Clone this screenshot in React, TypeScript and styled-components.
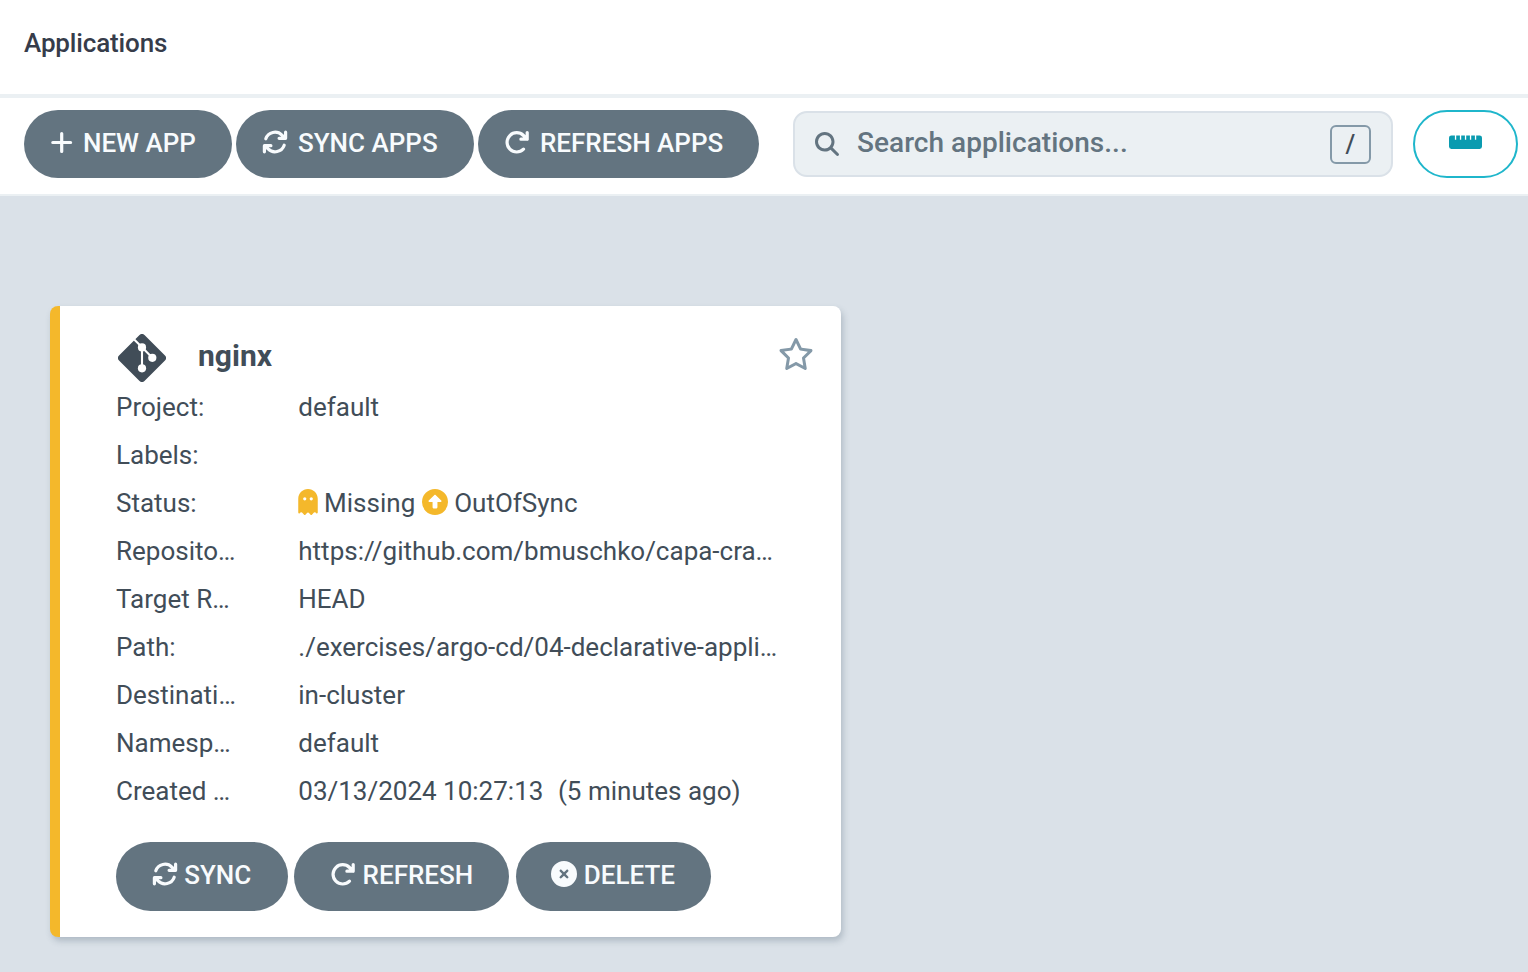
import React from 'react';
import styled, { createGlobalStyle } from 'styled-components';
import {
  FaMagnifyingGlass,
  FaRegStar,
  FaGhost,
  FaCircleUp,
  FaCircleXmark,
} from 'react-icons/fa6';

const GlobalStyle = createGlobalStyle`
  * { box-sizing: border-box; }
  body {
    margin: 0;
    background: #dae1e8;
    color: #414d58;
    font-family: Roboto, "Liberation Sans", sans-serif;
    font-size: 26px;
  }
`;

const Page = styled.div`
  display: flex;
  flex-direction: column;
  height: 972px;
  overflow: hidden;
`;

const TopBar = styled.header`
  height: 98px;
  padding: 28px 24px 0;
  background: #fff;
  border-bottom: 4px solid #ebf0f3;
`;

const Title = styled.h1`
  margin: 0;
  font-size: 26px;
  line-height: 30px;
  font-weight: 500;
  letter-spacing: -0.14px;
  color: #363c4a;
`;

const Toolbar = styled.div`
  display: flex;
  height: 98px;
  padding: 12px 10px 0 24px;
  background: #fff;
  border-bottom: 2px solid #ebf0f3;
`;

const Button = styled.button<{ $width: number }>`
  display: flex;
  align-items: center;
  flex: none;
  width: ${(p) => p.$width}px;
  height: 68px;
  padding: 0 0 2px 25.6px;
  gap: 10.4px;
  border: 0;
  border-radius: 35px;
  background: #637480;
  color: #f8fbfd;
  font: 500 26px/30px Roboto, "Liberation Sans", sans-serif;
  white-space: nowrap;
  svg {
    flex: none;
    margin-bottom: 1.5px;
  }
`;

const CardButton = styled(Button)`
  height: 69px;
  padding: 0 0 4px 35.8px;
  gap: 6.4px;
  svg { margin-bottom: 0.6px; }
`;

const ButtonGroup = styled.div<{ $gap: number }>`
  display: flex;
  gap: ${(p) => p.$gap}px;
`;

const SearchBox = styled.div`
  display: flex;
  align-items: center;
  width: 600px;
  height: 66px;
  margin: 1px 20px 0 34px;
  padding: 0 20px;
  border: 2px solid #dae1e8;
  border-radius: 14px;
  background: #ebf0f3;
  color: #637480;
  svg {
    flex: none;
    margin-bottom: 1px;
  }
`;

const Placeholder = styled.span`
  flex: 1;
  margin: 0 0 3px 18px;
  font-size: 28px;
  line-height: 32px;
  font-weight: 500;
  letter-spacing: 0.03px;
`;

const Key = styled.kbd`
  display: flex;
  align-items: center;
  justify-content: center;
  width: 41px;
  height: 39px;
  margin-top: 1px;
  border: 2px solid #8499a8;
  border-radius: 6px;
  color: #414d58;
  font: 500 25px/30px Roboto, "Liberation Sans", sans-serif;
`;

const OutlineButton = styled.button`
  display: flex;
  align-items: center;
  justify-content: center;
  width: 105px;
  height: 68px;
  padding: 0 0 4px;
  border: 2px solid #1fb6cb;
  border-radius: 35px;
  background: #fff;
`;

const Main = styled.main`
  flex: 1;
  padding: 110px 50px 0;
`;

const Card = styled.article`
  width: 791px;
  height: 631px;
  padding: 26px 27px 0 56px;
  border-left: 10px solid #f4b82b;
  border-radius: 8px;
  background: #fff;
  box-shadow: 2px 4px 6px rgba(80, 100, 115, 0.3);
`;

const CardHeader = styled.div`
  display: flex;
  height: 51px;
  svg { flex: none; }
`;

const SourceIcon = styled.span`
  display: flex;
  margin: 2px 0 0 2px;
`;

const FavouriteIcon = styled.span`
  display: flex;
  margin-top: 4px;
  color: #8499a8;
`;

const AppName = styled.h2`
  flex: 1;
  margin: 7px 0 0 32px;
  font-size: 30px;
  line-height: 34px;
  font-weight: 700;
`;

const Fields = styled.dl`
  margin: 0 0 27px;
`;

const Field = styled.div`
  display: grid;
  grid-template-columns: 182.3px 1fr;
  height: 48px;
  line-height: 48px;
  white-space: pre;
`;

const Label = styled.dt`
  margin: 0;
`;

const Value = styled.dd`
  display: flex;
  align-items: center;
  margin: 0;
`;

const Age = styled.span`
  margin-left: 14.6px;
`;

const StatusIcon = styled.span<{ $left?: number; $right: number }>`
  display: flex;
  margin: 0 ${(p) => p.$right}px 2px ${(p) => p.$left ?? 0}px;
  color: #f4b82b;
`;

const GhostIcon = styled(FaGhost)`
  width: 20px;
  height: 26px;
`;

const LineIcon = styled.svg.attrs({
  fill: 'none',
  stroke: 'currentColor',
  strokeWidth: 3.2,
  strokeLinecap: 'round',
  strokeLinejoin: 'round',
})``;

const PlusIcon = () => (
  <LineIcon width="23" height="23" viewBox="0 0 23 23">
    <path d="M11.7 2.6V20.4M2.8 11.5H20.6" />
  </LineIcon>
);

const SyncIcon = () => (
  <LineIcon width="26" height="26" viewBox="-13 -13 26 26">
    <path d="M-9.2 -3.2A9.75 9.75 0 0 1 6.9 -6.9L10.1 -3.7M10.6 -9.8V-3.7H4.1" />
    <path d="M9.2 3.2A9.75 9.75 0 0 1 -6.9 6.9L-10.1 3.7M-10.6 9.8V3.7H-4.1" />
  </LineIcon>
);

const RefreshIcon = () => (
  <LineIcon width="26" height="26" viewBox="0 0 26 26">
    <path d="M19.5 20.2A9.65 9.65 0 1 1 19.5 6.5L23.2 10.2M23.2 3.6V10.2H16.9" />
  </LineIcon>
);

const GitIcon = () => (
  <svg width="48" height="48" viewBox="0 0 48 48">
    <rect x="6" y="6" width="36" height="36" rx="3.5" fill="#414d58" transform="rotate(45 24 24)" />
    <path d="M16.2 5.5L24 13.3L34.3 23.7M24 13.3V34.3" fill="none" stroke="#fff" strokeWidth="2.1" />
    <g fill="#fff">
      <circle cx="24" cy="13.4" r="4.1" />
      <circle cx="34.3" cy="23.8" r="4.1" />
      <circle cx="24" cy="34.3" r="4.1" />
    </g>
  </svg>
);

const Ruler = () => (
  <svg width="33" height="14" viewBox="0 0 33 14">
    <path
      d="M2.4 0.4H5.9V4.8H7.2V0.4H10.9V4.8H12.2V0.4H15.9V4.8H17.2V0.4H20.9V4.8H22.2V0.4H25.9V4.8H27.2V0.4H30.6A2.4 2.4 0 0 1 33 2.8V11.5A2.4 2.4 0 0 1 30.6 13.9H2.4A2.4 2.4 0 0 1 0 11.5V2.8A2.4 2.4 0 0 1 2.4 0.4Z"
      fill="#0a9bb0"
    />
  </svg>
);

const fields: { label: string; value: React.ReactNode }[] = [
  { label: 'Project:', value: 'default' },
  { label: 'Labels:', value: '' },
  {
    label: 'Status:',
    value: (
      <>
        <StatusIcon $right={5.8}><GhostIcon /></StatusIcon>
        Missing
        <StatusIcon $left={6.8} $right={6.2}><FaCircleUp size={26} /></StatusIcon>
        OutOfSync
      </>
    ),
  },
  { label: 'Reposito…', value: 'https://github.com/bmuschko/capa-cra…' },
  { label: 'Target R…', value: 'HEAD' },
  { label: 'Path:', value: './exercises/argo-cd/04-declarative-appli…' },
  { label: 'Destinati…', value: 'in-cluster' },
  { label: 'Namesp…', value: 'default' },
  {
    label: 'Created …',
    value: (
      <>
        03/13/2024 10:27:13
        <Age>(5 minutes ago)</Age>
      </>
    ),
  },
];

export default function App() {
  return (
    <>
      <GlobalStyle />
      <Page>
        <TopBar>
          <Title>Applications</Title>
        </TopBar>
        <Toolbar>
          <ButtonGroup $gap={4}>
            <Button $width={208}><PlusIcon />NEW APP</Button>
            <Button $width={238}><SyncIcon />SYNC APPS</Button>
            <Button $width={281}><RefreshIcon />REFRESH APPS</Button>
          </ButtonGroup>
          <SearchBox>
            <FaMagnifyingGlass size={24} />
            <Placeholder>Search applications...</Placeholder>
            <Key>/</Key>
          </SearchBox>
          <OutlineButton aria-label="Toggle status bar"><Ruler /></OutlineButton>
        </Toolbar>
        <Main>
          <Card>
            <CardHeader>
              <SourceIcon><GitIcon /></SourceIcon>
              <AppName>nginx</AppName>
              <FavouriteIcon><FaRegStar size={36} /></FavouriteIcon>
            </CardHeader>
            <Fields>
              {fields.map((f) => (
                <Field key={f.label}>
                  <Label>{f.label}</Label>
                  <Value>{f.value}</Value>
                </Field>
              ))}
            </Fields>
            <ButtonGroup $gap={6.4}>
              <CardButton $width={172}><SyncIcon />SYNC</CardButton>
              <CardButton $width={214.8}><RefreshIcon />REFRESH</CardButton>
              <CardButton $width={195.4}><FaCircleXmark size={26} />DELETE</CardButton>
            </ButtonGroup>
          </Card>
        </Main>
      </Page>
    </>
  );
}
